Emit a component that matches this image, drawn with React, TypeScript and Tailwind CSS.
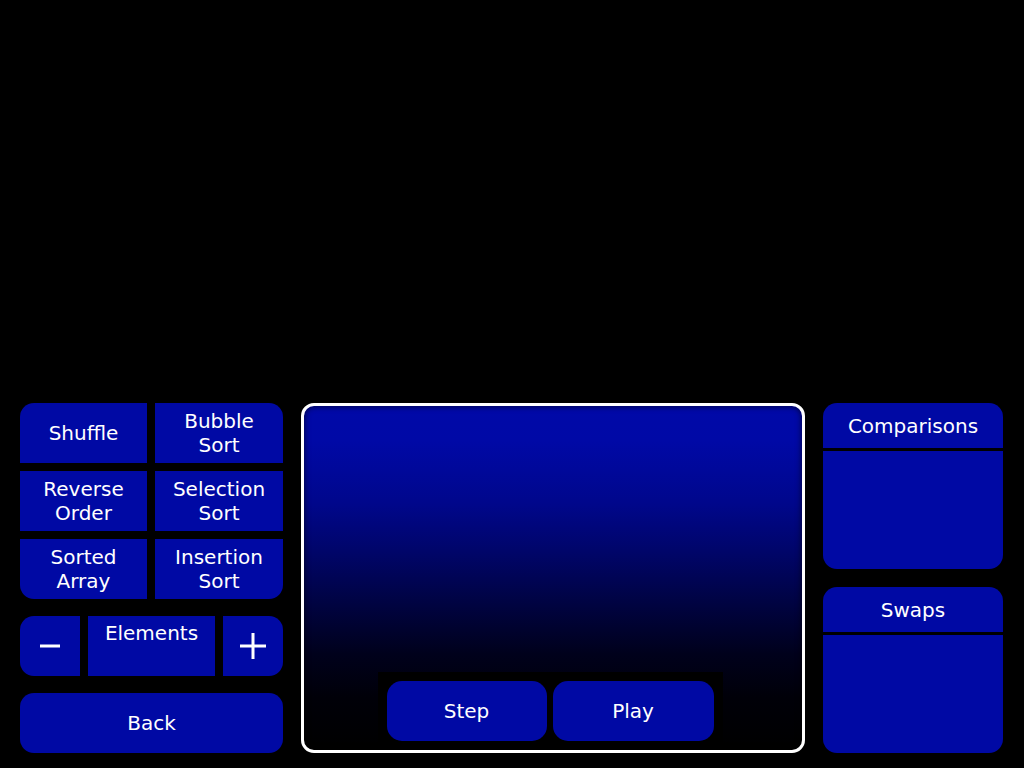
import React from 'react';

const font = { fontFamily: '"DejaVu Sans", "Lucida Grande", sans-serif' };

function Cell({ label, className = '' }: { label: React.ReactNode; className?: string }) {
  return (
    <button className={`flex h-[60px] items-center justify-center bg-[#0009a4] text-center text-[20px] leading-[24px] text-white ${className}`}>
      {label}
    </button>
  );
}

function Counter({ title }: { title: string }) {
  return (
    <div className="flex h-[166px] flex-col overflow-hidden rounded-[14px] bg-[#0009a4]">
      <div className="flex h-[45px] items-center justify-center text-[20px] leading-[24px] text-white">{title}</div>
      <div className="h-[3px] bg-black" />
      <div className="flex-1" />
    </div>
  );
}

export default function App() {
  return (
    <main className="flex h-screen flex-col justify-end bg-black pb-[15px] pl-[20px]" style={font}>
      <div className="flex items-start">
        {/* left controls */}
        <div className="flex w-[263px] flex-col">
          <div className="grid grid-cols-[127px_128px] gap-[8px]">
            <Cell label="Shuffle" className="rounded-tl-[14px]" />
            <Cell label={<>Bubble<br />Sort</>} className="rounded-tr-[14px]" />
            <Cell label={<>Reverse<br />Order</>} />
            <Cell label={<>Selection<br />Sort</>} />
            <Cell label={<>Sorted<br />Array</>} className="rounded-bl-[14px]" />
            <Cell label={<>Insertion<br />Sort</>} className="rounded-br-[14px]" />
          </div>

          <div className="mt-[17px] flex h-[60px] gap-[8px]">
            <button className="flex w-[60px] items-center justify-center rounded-l-[14px] bg-[#0009a4]">
              <svg width="20" height="4" viewBox="0 0 20 4"><rect x="0" y="0.5" width="20" height="3" fill="white" /></svg>
            </button>
            <div className="flex w-[127px] justify-center bg-[#0009a4] pt-[5px] text-[20px] leading-[24px] text-white">Elements</div>
            <button className="flex w-[60px] items-center justify-center rounded-r-[14px] bg-[#0009a4]">
              <svg width="26" height="26" viewBox="0 0 26 26">
                <rect x="0" y="11.5" width="26" height="3" fill="white" />
                <rect x="11.5" y="0" width="3" height="26" fill="white" />
              </svg>
            </button>
          </div>

          <button className="mt-[17px] flex h-[60px] items-center justify-center rounded-[14px] bg-[#0009a4] text-[20px] leading-[24px] text-white">
            Back
          </button>
        </div>

        {/* sort view */}
        <div className="ml-[18px] flex h-[350px] w-[504px] flex-col items-center justify-end overflow-hidden rounded-[13px] border-[3px] border-white bg-[linear-gradient(to_bottom,#0009a8_0%,#0009a6_10%,#00078c_28%,#00056a_42%,#000340_58%,#00011c_72%,#000008_85%,#000000_100%)] shadow-[inset_0_0_6px_rgba(0,0,0,0.7)]">
          <div className="mr-[6px] flex gap-[6px] bg-black p-[9px]">
            <button className="flex h-[60px] w-[160px] items-center justify-center rounded-[15px] bg-[#0009a4] text-[20px] text-white">Step</button>
            <button className="flex h-[60px] w-[161px] items-center justify-center rounded-[15px] bg-[#0009a4] text-[20px] text-white">Play</button>
          </div>
        </div>

        {/* stats */}
        <div className="ml-[18px] flex w-[180px] flex-col gap-[18px]">
          <Counter title="Comparisons" />
          <Counter title="Swaps" />
        </div>
      </div>
    </main>
  );
}
